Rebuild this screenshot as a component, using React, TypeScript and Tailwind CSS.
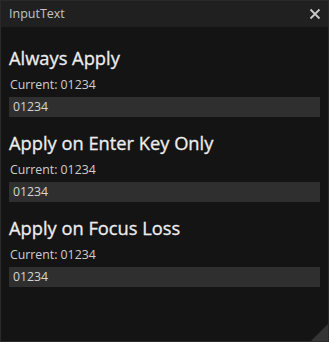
import React from 'react';

const sections = [
  { title: 'Always Apply', value: '01234' },
  { title: 'Apply on Enter Key Only', value: '01234' },
  { title: 'Apply on Focus Loss', value: '01234' },
];

const App = () => {
  return (
    <div
      className="relative w-[329px] h-[342px] bg-[#141414] border border-[#2a2a2a] flex flex-col overflow-hidden"
      style={{ fontFamily: '"Open Sans", "Noto Sans", sans-serif' }}
    >
      {/* Title bar */}
      <div className="h-[26px] bg-[#202020] flex items-center justify-between pl-[8px] pr-[7px] shrink-0">
        <span className="text-[12.5px] text-[#c4c4c4] leading-none">InputText</span>
        <svg width="12" height="12" viewBox="0 0 12 12" className="text-[#c8c8c8]">
          <path d="M1.5 1.5 L10.5 10.5 M10.5 1.5 L1.5 10.5" stroke="currentColor" strokeWidth="1.8" />
        </svg>
      </div>

      {/* Content */}
      <div className="flex flex-col px-[8px] pt-[19px] gap-[14px]">
        {sections.map((s) => (
          <div key={s.title} className="flex flex-col">
            <h2 className="text-[18.3px] leading-[24px] text-[#ededed] [-webkit-text-stroke:0.3px_#ededed]">{s.title}</h2>
            <p className="text-[12.3px] leading-[18px] mt-[6px] pl-[1px] text-[#cfcfcf]">Current: {s.value}</p>
            <div className="mt-[3px] h-[20px] bg-[#2f2f2f] flex items-center px-[4px]">
              <span className="text-[12.3px] text-[#d6d6d6] leading-none">{s.value}</span>
            </div>
          </div>
        ))}
      </div>

      {/* Resize grip */}
      <svg width="17" height="17" viewBox="0 0 17 17" className="absolute right-0 bottom-0">
        <path d="M17 0 L17 17 L0 17 Z" fill="#353535" />
      </svg>
    </div>
  );
};

export default App;
